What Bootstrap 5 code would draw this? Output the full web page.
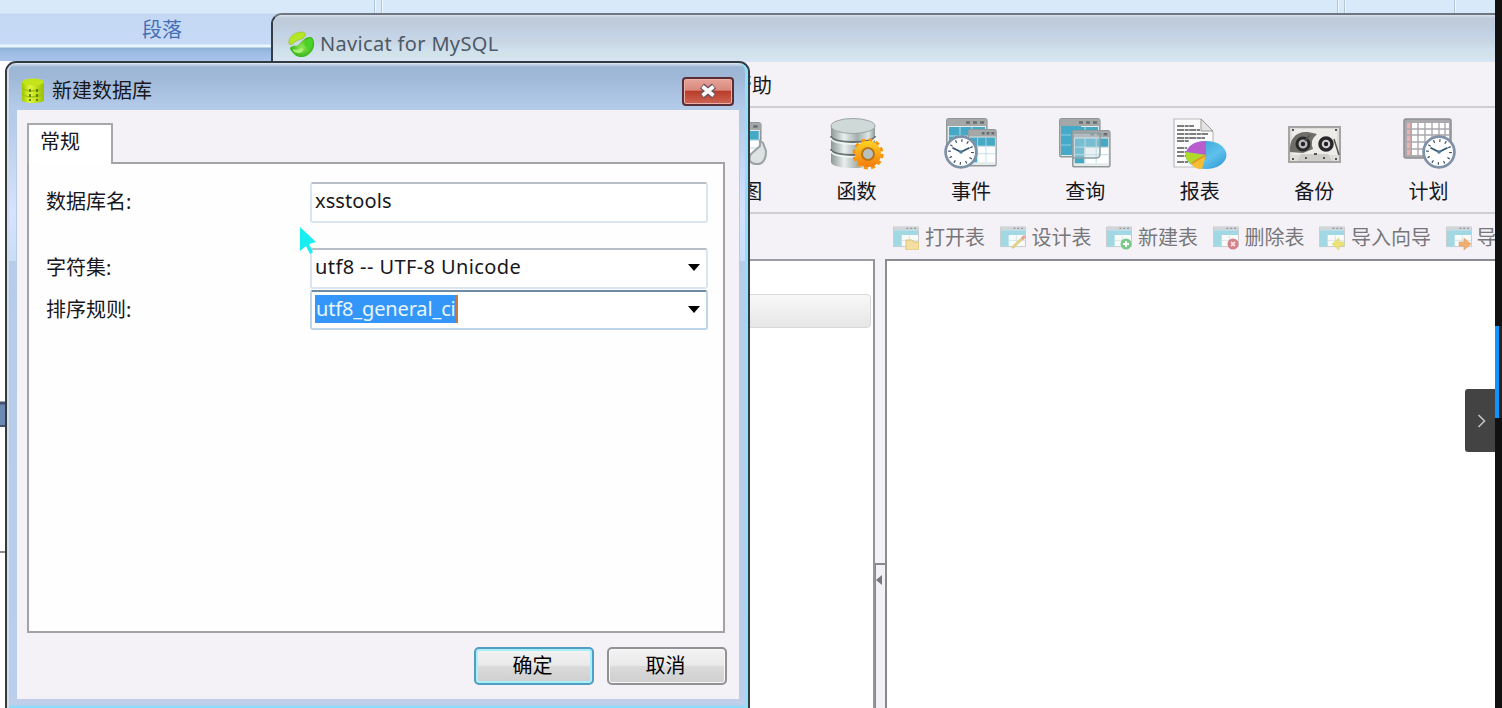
<!DOCTYPE html>
<html lang="zh-CN">
<head>
<meta charset="utf-8">
<title>Navicat for MySQL</title>
<link href="https://cdn.jsdelivr.net/npm/bootstrap@5.3.0/dist/css/bootstrap.min.css" rel="stylesheet">
<style>
body{width:1502px;height:708px;background:#fff;font:20px/24px "Noto Sans","Noto Sans CJK SC",sans-serif;color:#17171c}
.desk{width:1495px;height:708px}
.ribbon{height:61px;background:linear-gradient(#d8e9f9 0 13px,#c4d8f3 14px,#c6daf7 44px,#e9f6fb 45px 47px,#8eafd3 48px,#9cbbe4 52px,#a9c4ea 61px)}
.ribbon-caption{width:324px;padding-top:18px;color:#456fb4}
.sep{width:2px;height:14px;background:#b3c6dc;border-right:1px solid #eef7fd}
.win{left:271px;top:13px;width:1224px;height:695px;border-top:2px solid #6f7782;border-left:2px solid #343d47;border-top-left-radius:11px;background:#f4f2f6}
.win-title{height:47px;padding:11px 0 0 15px;gap:5px;background:linear-gradient(#dbe3ec 0,#bfcbdb 3px,#c0cddd 12px,#c3d4e8 20px,#c9d5e1 26px,#cfdfed 34px,#d3e3e9 40px,#d7e5f7);color:#4d5967;border-top-left-radius:9px}
.menu{height:46px;padding:12px 0 0 459px;border-bottom:2px solid #cfcdd1}
.tools{height:106px;padding-left:412px;border-bottom:2px solid #cfced1}
.tool{flex:0 0 114.4px;padding-top:9px}
.tool svg{display:block;margin-bottom:9px}
.subtools{height:45px;padding:3px 0 0 620px;gap:14.5px;color:#77777b;overflow:hidden}
.subtools>div{flex:none;gap:6px;white-space:nowrap}
.tree{width:602px;border-top:2px solid #9c9ca3;border-right:2px solid #94949c;background:#fff;padding:33px 2px 0 0}
.tree-row{height:34px;border:1.5px solid #d8d8d9;border-radius:4px;background:linear-gradient(#f8f8f8,#e6e6e7)}
.split{width:10px;padding-top:304px}
.grip{border:solid #88888f;border-width:2px 2px 0 1px;background:#f2f1f6;padding-top:10px;margin-right:-2px}
.view{border:solid #8b8b94;border-width:2px 0 0 2px;background:#fff}
.dlg{left:5px;top:61px;width:745px;height:660px;border:2px solid #333a42;border-radius:11px 11px 0 0;background:linear-gradient(#dfe9f3 0,#9cb6d6 4px,#a0b8d8 14px,#a7c0e0 26px,#b5cce9 47px,#b9cfec)}
.dlg-edge{border:2px solid #d2deea;border-top:0;border-right:3px solid #8ee1f8;border-radius:9px 9px 0 0;height:100%}
.shine{width:7px;height:198px;top:0;background:linear-gradient(#0000 60px,#d6e3ff 150px,#c7ddf8)}
.dlg-title{height:47px;padding:9px 11px 0 12px;gap:7px}
.close-x{width:52px;height:29px;border:2px solid #592e36;border-radius:4px;background:linear-gradient(#e6a49a,#d9887c 45%,#b93c28 48%,#cd6555);box-shadow:inset 0 0 0 1px #ecb0a8}
.client{margin:0 6px 0 8px;height:589px;padding:13px 14px 0 10px;background:#f4f2f6}
.tabx{width:86px;height:41px;border:2px solid #a8a7aa;border-bottom:0;background:#fff;padding:5px 0 0 11px;margin-bottom:-2px}
.pane{height:471px;border:2px solid #a3a3a6;background:#fefeff;padding:17px 14px 0 17px}
.rowx{height:42px}
.lbl{width:264px}
.fld{width:398px;height:41px;border:2px solid #dae5f1;border-top-color:#b9bdc8;border-radius:3px;padding:0 6px 2px 3px;background:#fff}
.fld.hot{border-color:#bdd5e9;border-top-color:#6d8ba4;height:40px}
.latin{letter-spacing:.1px;white-space:nowrap}
.sel{letter-spacing:-.15px;background:#3596fa;color:#e9f6ff;height:28px;line-height:28px;border-right:2px solid #c8793f;padding-left:1px}
.foot{padding-top:14px;gap:13px;margin-right:-2px}
.btnx{width:120px;height:38px;border:2px solid #929296;border-radius:5px;background:linear-gradient(#f3f3f3,#e9e9e9 48%,#dadada 52%,#cfcfcf);box-shadow:inset 0 0 0 1px #f8f8f8;padding:0 3px 0 0}
.btnx.def{border-color:#509fc0;box-shadow:inset 0 0 0 2px #aaf0fb}
.dlg-bottom{height:9px;background:linear-gradient(#bfcfeb 0 6px,#8edcfa 7px)}
.strip{width:7px;height:708px;background:#111;padding-top:326px}
.thumb{height:92px;background:#252525;border-left:4px solid #0a95ff}
.pull{left:1465px;top:389px;width:30px;height:63px;background:#434343;border-radius:3px 0 0 3px}
.cursor{left:298px;top:225px}
</style>
<script src="https://cdn.jsdelivr.net/npm/bootstrap@5.3.0/dist/js/bootstrap.bundle.min.js"></script>
</head>
<body class="overflow-hidden">
<svg width="0" height="0" class="position-absolute">
<defs>
<linearGradient id="metal"><stop stop-color="#8b9796"/><stop offset=".3" stop-color="#e9efee"/><stop offset=".6" stop-color="#a3afae"/><stop offset=".85" stop-color="#dfe6e5"/><stop offset="1" stop-color="#8e9998"/></linearGradient>
<linearGradient id="gold" x2="0" y2="1"><stop stop-color="#ffd322"/><stop offset="1" stop-color="#f47a0c"/></linearGradient>
<linearGradient id="lime"><stop stop-color="#9fc800"/><stop offset=".35" stop-color="#e4f63a"/><stop offset="1" stop-color="#98c100"/></linearGradient>
<radialGradient id="leaf"><stop stop-color="#8fe850"/><stop offset="1" stop-color="#36b51b"/></radialGradient>
<linearGradient id="sky" x2="1" y2="1"><stop stop-color="#2f9fd2"/><stop offset=".6" stop-color="#5fc0ec"/><stop offset="1" stop-color="#2a93d2"/></linearGradient>
<symbol id="clock" viewBox="0 0 32 32"><circle cx="16" cy="16" r="14.5" fill="#fff" stroke="#7f91a8" stroke-width="2.6"/><circle cx="16" cy="16" r="10.8" fill="none" stroke="#39485c" stroke-width="2.6" stroke-dasharray="1.1 4.555"/><path d="M8 12l8 4 8-4" fill="none" stroke="#335571" stroke-width="1.8"/><circle cx="16" cy="16" r="1.7" fill="#52809d"/></symbol>
<symbol id="sheet" viewBox="0 0 42 40" preserveAspectRatio="none"><rect x=".8" y=".8" width="40" height="38" rx="2" fill="#e5eaeb" stroke="#919899" stroke-width="1.6"/><path d="M1 1h40v7H1z" fill="#a3a7a8"/><path d="M20 4.5h4M27 4.5h4M34 4.5h4" stroke="#686d6f" stroke-width="2.5"/><path d="M3 9h36v9H3zM3 18h10v17H3z" fill="#45a9c6"/><path d="M14 19h25v16H14z" fill="#fff"/><path d="M3 18h36M14 9v26M26 9v26M3 26h36" stroke="#b4dbe5" stroke-width="1"/></symbol>
<symbol id="tbl" viewBox="0 0 27 24"><path d="M.5 1h26v20.500H.5z" fill="#f9fbfb" stroke="#c4cbcc"/><path d="M1 1h25v3.500H1z" fill="#d1d6d8"/><path d="M14 2.500h2M18 2.500h2M22 2.500h2" stroke="#8e9698" stroke-width="1.5"/><path d="M1 4.500h25v5H9v12H1z" fill="#a1d8e3"/><path d="M9 15h17M17 10v11" stroke="#d8e2e6"/></symbol>
</defs></svg>

<div class="position-relative d-flex">
<div class="desk position-relative overflow-hidden">
 <div class="ribbon d-flex justify-content-between">
  <div class="ribbon-caption text-center">段落</div>
  <div class="d-flex" style="gap:5px;margin-left:50px"><i class="sep"></i><i class="sep"></i></div>
  <div class="d-flex ms-auto" style="gap:5px;margin-right:39px"><i class="sep"></i><i class="sep"></i><i class="sep" style="margin-left:103px"></i></div>
 </div>
 <svg width="6" height="640" class="d-block"><path d="M0 341h6v25H0z" fill="#6b88b3"/><path d="M0 342h6" stroke="#47536a" stroke-width="3"/><path d="M0 365h6" stroke="#47536a" stroke-width="2"/><path d="M0 491h6" stroke="#8c8c90" stroke-width="2"/></svg>

 <section class="win position-absolute d-flex flex-column">
  <header class="win-title d-flex align-items-center">
   <svg width="27" height="27" viewBox="0 0 27 27"><path d="M1 13C0 6 6 1 14 1c3 0 4 2 3 4-2 4-7 3-10 6-2 1-3 4-6 2z" fill="#b7e526" stroke="#8cbf25" stroke-width=".6"/><path d="M2 17c3-4 6-1 8-3 4-3 6-8 13-8 4 2 4 10 1 14-4 6-12 8-17 4-2-2-5-5-5-7z" fill="url(#leaf)"/><path d="M16 13c2-4 4-6 7-6 3 3 2 7 0 10-2 2-5 1-7-4z" fill="#4bd226"/><path d="M5 18c4 2 6-1 9-1 3 1 1 4-2 5-4 0-7-1-7-4z" fill="#a7ef73"/></svg>
   <span id="cap" class="latin" style="letter-spacing:.33px">Navicat for MySQL</span>
  </header>
  <div class="menu">帮助</div>
  <div class="tools d-flex overflow-hidden">
   <div class="tool d-flex flex-column align-items-center"><svg width="54" height="54" viewBox="0 0 54 54"><use href="#sheet" x="1" y="5" width="46" height="40"/><path d="M36 37l9-8v-5l3 2 3 8q0 13-9 13t-7-8z" fill="#dde2e3" stroke="#9ca3a5" stroke-width="2"/></svg>视图</div>
   <div class="tool d-flex flex-column align-items-center"><svg width="54" height="54" viewBox="0 0 54 54"><path d="M1 8v37c0 8 44 8 44 0V8z" fill="url(#metal)"/><path d="M1 19c0 8 44 8 44 0M1 32c0 8 44 8 44 0" fill="none" stroke="#657271" stroke-width="1.8"/><path d="M1 21c0 8 44 8 44 0M1 34c0 8 44 8 44 0" fill="none" stroke="#f1f5f4" stroke-width="1.4"/><ellipse cx="23" cy="9" rx="22" ry="7.500" fill="#cfd9d7" stroke="#9aa6a4"/><circle cx="38" cy="37" r="13.800" fill="none" stroke="#f6940e" stroke-width="3.500" stroke-dasharray="4 3.225"/><circle cx="38" cy="37" r="13" fill="url(#gold)"/><circle cx="38" cy="37" r="6" fill="#b7c1bf" stroke="#b97318" stroke-width="2"/></svg>函数</div>
   <div class="tool d-flex flex-column align-items-center"><svg width="54" height="54" viewBox="0 0 54 54"><use href="#sheet" x="2" y="1" width="42" height="40"/><use href="#sheet" x="24" y="12" width="29" height="38"/><use href="#clock" x="0" y="18" width="34" height="34"/></svg>事件</div>
   <div class="tool d-flex flex-column align-items-center"><svg width="54" height="54" viewBox="0 0 54 54"><use href="#sheet" x="1" y="1" width="42" height="40"/><path d="M3 9h20v29H3z" fill="#45a9c8"/><path d="M3 18h10M3 28h10" stroke="#8bcee0"/><use href="#sheet" x="14" y="13" width="39" height="38"/><path d="M15 16h27v21q0 4-4 4H15z" fill="#c9dde3" fill-opacity=".4" stroke="#8fa0a5" stroke-width="1.500"/></svg>查询</div>
   <div class="tool d-flex flex-column align-items-center"><svg width="54" height="54" viewBox="0 0 54 54"><path d="M1 2h27l12 13v35H1z" fill="#fbfbfb" stroke="#bbb" stroke-width="1.200"/><path d="M28 2v12h12z" fill="#e4e4e4" stroke="#999"/><path d="M4 9h17M4 13h23M4 17h31M4 21h28M4 24h12M4 31h10M4 35h9M4 39h10M4 45h11" stroke="#555" stroke-width="1.500" stroke-dasharray="7 .7 4 .5"/><ellipse cx="33" cy="38" rx="20.500" ry="14" fill="url(#sky)"/><path d="M33 38L33 24Q18 24 13 35z" fill="#b95ccc"/><path d="M33 38L13 35Q11 42 18 47z" fill="#b1d929"/><path d="M33 38L18 47Q23 53 29 52z" fill="#f4bd34"/><path d="M33 38L19 46" stroke="#df9824" stroke-width="2"/></svg>报表</div>
   <div class="tool d-flex flex-column align-items-center"><svg width="54" height="54" viewBox="0 0 54 54"><rect x="2" y="10" width="51" height="35" fill="#deddda" stroke="#a5a5a4" stroke-width="2"/><path d="M5 12h45v26H5z" fill="#edecea"/><path d="M3 35C2 22 9 14 21 15l9 2q-8 7-4 15l-10 4z" fill="#6e6f68"/><circle cx="16" cy="27" r="6" fill="#bbb" stroke="#292929" stroke-width="3"/><circle cx="39" cy="27" r="6" fill="#d4d4d4" stroke="#292929" stroke-width="3.500"/><circle cx="16" cy="27" r="2.200" fill="#222"/><circle cx="39" cy="27" r="2.200" fill="#222"/><path d="M47 22l5 16M18 24l5-6" stroke="#555" stroke-width="1.500"/><path d="M10 44l4-7h27l4 7z" fill="#cecdca"/><path d="M5 13h2M48 13h2M5 42h2M48 42h2M27 37h3M18 41h2M36 41h2" stroke="#555" stroke-width="2"/></svg>备份</div>
   <div class="tool d-flex flex-column align-items-center"><svg width="54" height="54" viewBox="0 0 54 54"><rect x="2" y="2" width="47" height="39" rx="2" fill="#aaa9ad" stroke="#8e9092" stroke-width="1.500"/><path d="M5 6h4v32H5z" fill="#efb0ae"/><path d="M10 6h37v32H10z" fill="#fff"/><path d="M9 6v32M16 6v32M23 6v32M30 6v32M37 6v32M43 6v32M5 12h42M5 18h42M5 25h42M5 32h42" stroke="#aaa8ae" stroke-width="1.400"/><use href="#clock" x="20" y="18" width="34" height="34"/></svg>计划</div>
  </div>
  <div class="subtools d-flex align-items-center">
   <div class="d-flex align-items-center"><svg width="26" height="24"><use href="#tbl" width="26" height="23"/><path d="M13 14h6l2 2h5v8H13z" fill="#f3dfa1" stroke="#dbc279"/></svg>打开表</div>
   <div class="d-flex align-items-center"><svg width="26" height="24"><use href="#tbl" width="26" height="23"/><path d="M12 22L24 11" stroke="#dfd287" stroke-width="3"/><path d="M22 13l3-3" stroke="#dfa1a1" stroke-width="3"/></svg>设计表</div>
   <div class="d-flex align-items-center"><svg width="26" height="24"><use href="#tbl" width="26" height="23"/><circle cx="20" cy="18" r="5.500" fill="#7ac98a"/><path d="M17 18h6M20 15v6" stroke="#fff" stroke-width="2"/></svg>新建表</div>
   <div class="d-flex align-items-center"><svg width="26" height="24"><use href="#tbl" width="26" height="23"/><circle cx="20" cy="18" r="5.500" fill="#d48187"/><path d="M18 16l4 4M22 16l-4 4" stroke="#f9dddd" stroke-width="1.800"/></svg>删除表</div>
   <div class="d-flex align-items-center"><svg width="26" height="24"><use href="#tbl" width="26" height="23"/><path d="M13 18l7-6v4h5v4h-5v4z" fill="#ebe27a" stroke="#ddd266" stroke-width=".6"/></svg>导入向导</div>
   <div class="d-flex align-items-center"><svg width="26" height="24"><use href="#tbl" width="26" height="23"/><path d="M25 18l-7-6v4h-5v4h5v4z" fill="#f1ae6e" stroke="#dda069" stroke-width=".6"/></svg><span style="margin-left:-1px">导</span></div>
  </div>
  <div class="d-flex flex-grow-1">
   <div class="tree"><div class="tree-row"></div></div>
   <div class="split d-flex flex-column"><div class="grip flex-grow-1 position-relative"><svg width="6" height="10" class="d-block"><path d="M6 0v10L0 5z" fill="#777780"/></svg></div></div>
   <div class="view flex-grow-1"></div>
  </div>
 </section>

 <section class="dlg position-absolute">
  <div class="dlg-edge position-relative">
   <i class="shine position-absolute start-0"></i><i class="shine position-absolute end-0" style="width:5px"></i>
   <header class="dlg-title d-flex align-items-center position-relative">
    <svg width="24" height="26" viewBox="0 0 24 26"><path d="M1 4v18c0 4 22 4 22 0V4z" fill="url(#lime)"/><ellipse cx="12" cy="4" rx="11" ry="3.500" fill="#c3e51a"/><path d="M1 10q4 3 10 3t12-3M1 16q4 3 10 3t12-3" fill="none" stroke="#9fc411" stroke-width="1.500"/><path d="M9 11v12M16 11v12" stroke="#64850c" stroke-width="2" stroke-dasharray="3 2"/></svg>
    <span>新建数据库</span>
    <span class="close-x ms-auto d-flex align-items-center justify-content-center"><svg width="20" height="16" viewBox="0 0 20 16"><path d="M4 3l12 10M16 3L4 13" stroke="#6d5460" stroke-width="6.500"/><path d="M4.500 3.500l11 9M15.500 3.500l-11 9" stroke="#fafafa" stroke-width="3.800"/></svg></span>
   </header>
   <main class="client position-relative">
    <div class="tabx position-relative">常规</div>
    <div class="pane">
     <div class="rowx d-flex align-items-center"><span class="lbl">数据库名:</span><div class="fld d-flex align-items-center"><span class="latin" id="f1">xsstools</span></div></div>
     <div class="rowx d-flex align-items-center" style="margin-top:24px"><span class="lbl">字符集:</span><div class="fld d-flex align-items-center justify-content-between"><span class="latin" id="f2" style="letter-spacing:.4px">utf8 -- UTF-8 Unicode</span><svg width="12" height="7"><path d="M0 0h12L6 7z"/></svg></div></div>
     <div class="rowx d-flex align-items-center"><span class="lbl">排序规则:</span><div class="fld hot d-flex align-items-center justify-content-between"><span class="sel" id="f3">utf8_general_ci</span><svg width="12" height="7"><path d="M0 0h12L6 7z"/></svg></div></div>
    </div>
    <footer class="foot d-flex justify-content-end"><button class="btnx def">确定</button><button class="btnx">取消</button></footer>
   </main>
   <div class="dlg-bottom"></div>
  </div>
 </section>
 <svg class="cursor position-absolute" width="20" height="30"><path d="M2 2v24l6-5 4 8 3-2-4-8 7-2z" fill="#18eef0"/></svg>
 <div class="pull position-absolute d-flex align-items-center justify-content-center"><svg width="10" height="14" style="margin-left:4px"><path d="M1.500 1l6 6-6 6" fill="none" stroke="#c4c4c4" stroke-width="1.600"/></svg></div>
</div>
<div class="strip"><div class="thumb"></div></div>
</div>
</body>
</html>
